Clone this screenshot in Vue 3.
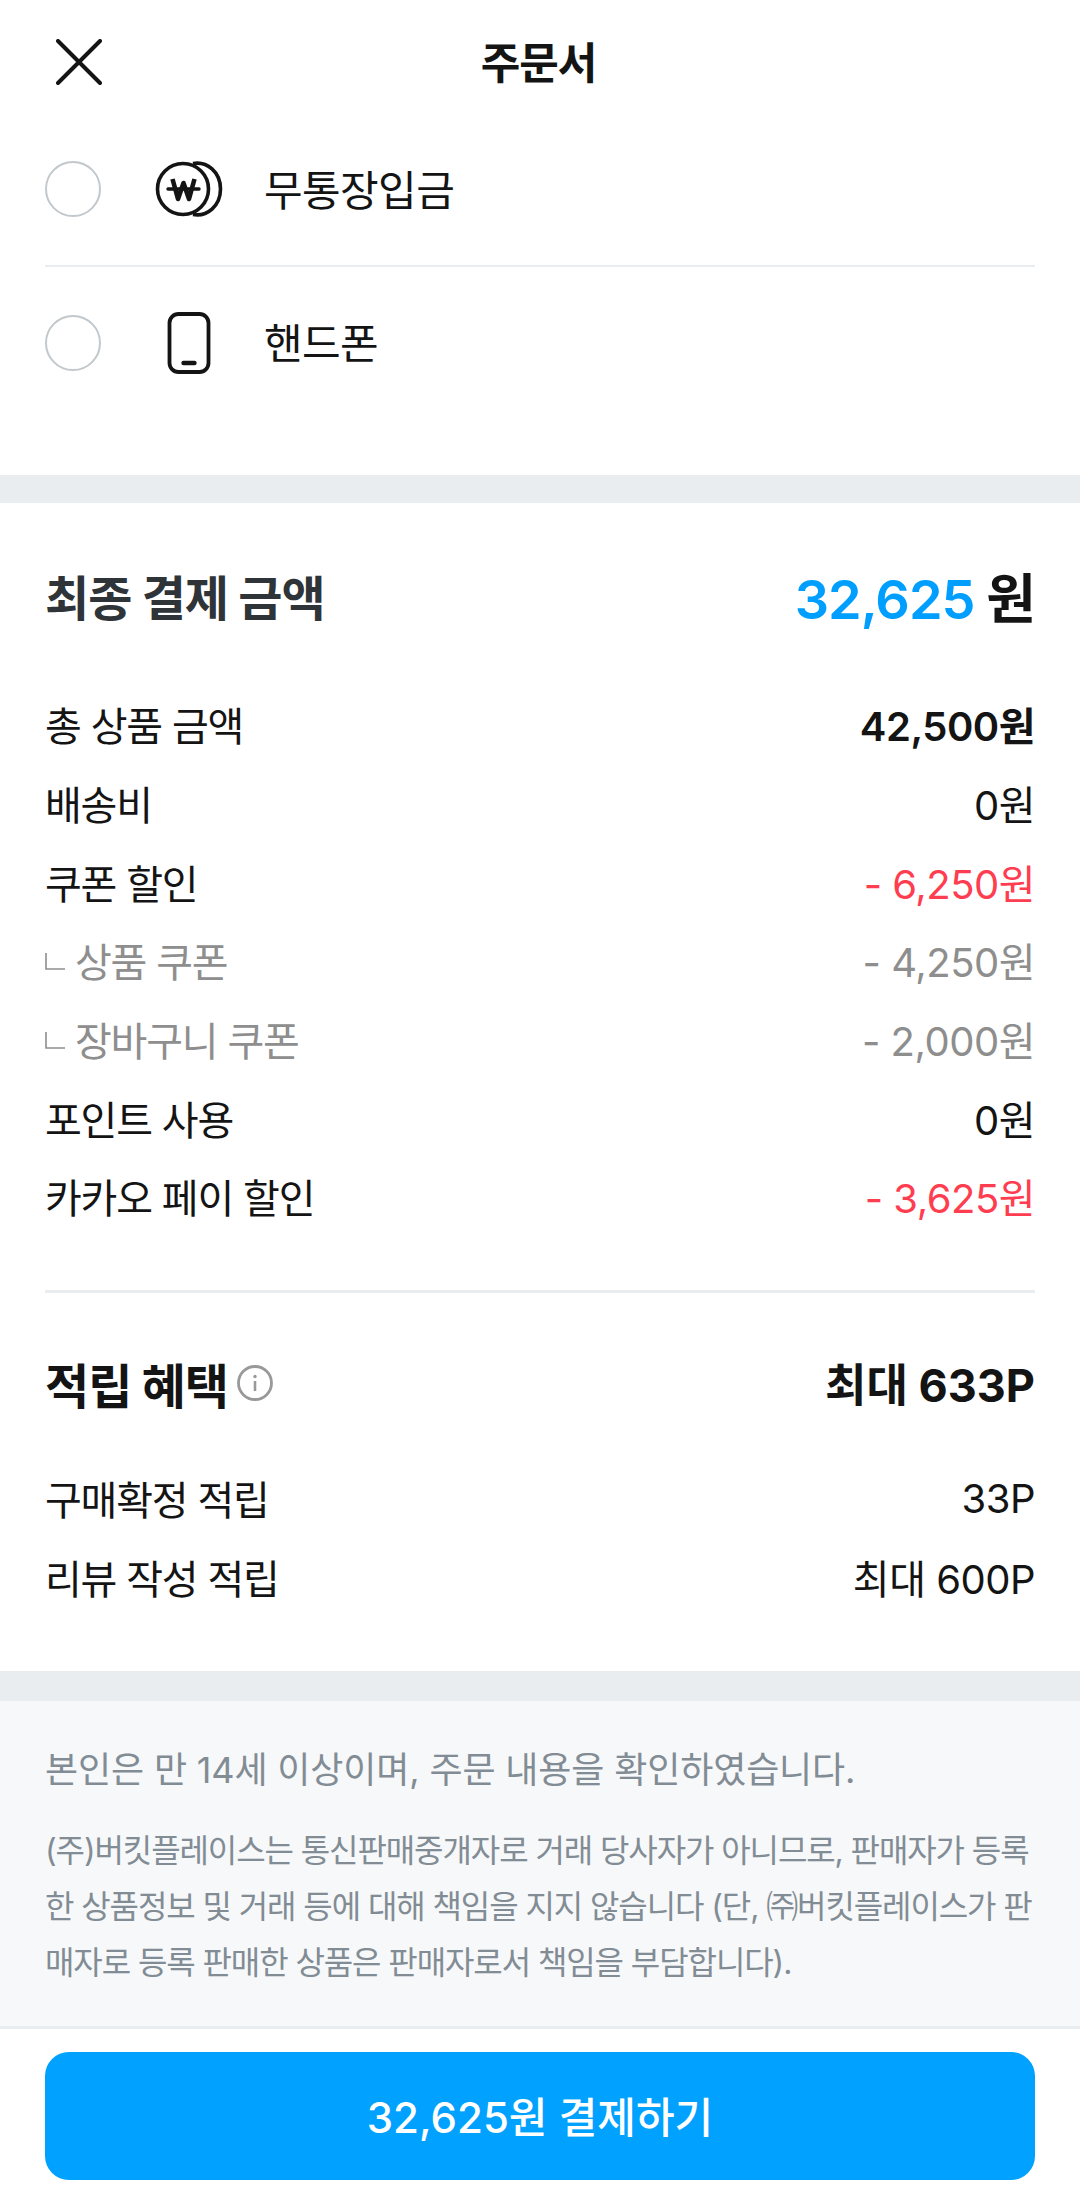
<template>
  <div class="page">
    <header class="top">
      <svg class="close" width="46" height="46" viewBox="0 0 46 46">
        <path d="M2 2 L44 44 M44 2 L2 44" fill="none" stroke="#141414" stroke-width="4" stroke-linecap="round" />
      </svg>
      <h1>주문서</h1>
    </header>

    <section class="methods">
      <div class="method first">
        <span class="radio"></span>
        <span class="method-icon">
          <svg width="68" height="56" viewBox="0 0 68 56">
            <path d="M38 2.5 C52 0 65.5 11 65.5 28 C65.5 45 52 56 38 53.5" fill="none" stroke="#141414" stroke-width="3.6" />
            <circle cx="28" cy="28" r="25.5" fill="#fff" stroke="#141414" stroke-width="3.6" />
            <path d="M17.5 18 L23 38 L28.5 22 L34 38 L39.5 18" fill="none" stroke="#141414" stroke-width="4.6" stroke-linejoin="round" />
            <path d="M13 28 H44" stroke="#141414" stroke-width="3.4" stroke-linecap="round" />
          </svg>
        </span>
        <span class="method-name">무통장입금</span>
      </div>
      <div class="method">
        <span class="radio"></span>
        <span class="method-icon">
          <svg width="44" height="62" viewBox="0 0 44 62">
            <rect x="2.5" y="2" width="39" height="58" rx="9" fill="none" stroke="#141414" stroke-width="3.8" />
            <path d="M16.5 51 H27.5" stroke="#141414" stroke-width="4.4" stroke-linecap="round" />
          </svg>
        </span>
        <span class="method-name">핸드폰</span>
      </div>
    </section>

    <section class="summary">
      <div class="total">
        <h2>최종 결제 금액</h2>
        <p class="total-price"><b>32,625</b> 원</p>
      </div>

      <ul class="rows">
        <li v-for="r in priceRows" :key="r.label" :class="r.type">
          <span class="label">
            <svg v-if="r.type === 'sub'" class="corner" width="20" height="17" viewBox="0 0 20 17">
              <path d="M1 0 V16 H20" fill="none" stroke="#8e8e8e" stroke-width="1.6" />
            </svg>
            {{ r.label }}
          </span>
          <span class="value">{{ r.value }}</span>
        </li>
      </ul>

      <hr class="line" />

      <div class="reward">
        <div class="reward-title">
          <h2>적립 혜택</h2>
          <svg width="36" height="36" viewBox="0 0 36 36">
            <circle cx="18" cy="18" r="16.5" fill="none" stroke="#999" stroke-width="2.8" />
            <circle cx="18" cy="11.5" r="1.7" fill="#999" />
            <path d="M18 16 V26" stroke="#999" stroke-width="2.6" />
          </svg>
        </div>
        <strong>최대 633P</strong>
      </div>

      <ul class="rows reward-rows">
        <li v-for="r in rewardRows" :key="r.label">
          <span class="label">{{ r.label }}</span>
          <span class="value">{{ r.value }}</span>
        </li>
      </ul>
    </section>

    <section class="notice">
      <p class="agree">본인은 만 14세 이상이며, 주문 내용을 확인하였습니다.</p>
      <p class="legal">(주)버킷플레이스는 통신판매중개자로 거래 당사자가 아니므로, 판매자가 등록한 상품정보 및 거래 등에 대해 책임을 지지 않습니다 (단, ㈜버킷플레이스가 판매자로 등록 판매한 상품은 판매자로서 책임을 부담합니다).</p>
    </section>

    <footer class="pay">
      <button>32,625원 결제하기</button>
    </footer>
  </div>
</template>

<script setup>
const priceRows = [
  { label: '총 상품 금액', value: '42,500원', type: 'bold' },
  { label: '배송비', value: '0원', type: '' },
  { label: '쿠폰 할인', value: '- 6,250원', type: 'minus' },
  { label: '상품 쿠폰', value: '- 4,250원', type: 'sub' },
  { label: '장바구니 쿠폰', value: '- 2,000원', type: 'sub' },
  { label: '포인트 사용', value: '0원', type: '' },
  { label: '카카오 페이 할인', value: '- 3,625원', type: 'minus' }
]

const rewardRows = [
  { label: '구매확정 적립', value: '33P' },
  { label: '리뷰 작성 적립', value: '최대 600P' }
]
</script>

<style>
html, body {
  margin: 0;
  background: #fff;
}
</style>

<style scoped>
.page {
  width: 1080px;
  height: 2202px;
  display: flex;
  flex-direction: column;
  overflow: hidden;
  background: #fff;
  color: #141414;
  font-family: Inter, "Noto Sans CJK KR", sans-serif;
}
h1, h2, p, ul {
  margin: 0;
  padding: 0;
}
ul { list-style: none; }

/* 상단 바 */
.top {
  height: 124px;
  box-sizing: border-box;
  padding: 0 3px 4px 0;
  display: flex;
  align-items: center;
  justify-content: center;
  position: relative;
}
.close {
  position: absolute;
  left: 56px;
  top: 39px;
}
.top h1 {
  font-size: 43px;
  font-weight: 700;
  letter-spacing: -1px;
}

/* 결제 수단 */
.methods {
  padding: 0 45px 57px;
  border-bottom: 28px solid #eaedef;
}
.method {
  height: 153px;
  box-sizing: border-box;
  display: flex;
  align-items: center;
  border-top: 2px solid #eaedef;
}
.method.first {
  height: 141px;
  padding-bottom: 11px;
  border-top: 0;
}
.radio {
  width: 56px;
  height: 56px;
  box-sizing: border-box;
  border: 2px solid #c2c8cc;
  border-radius: 50%;
}
.method-icon {
  width: 68px;
  margin-left: 54px;
  display: flex;
  justify-content: center;
}
.method-name {
  margin-left: 41px;
  padding-bottom: 4px;
  font-size: 42px;
  letter-spacing: -0.6px;
}

/* 결제 금액 */
.summary {
  padding: 0 45px;
  border-bottom: 30px solid #eaedef;
  height: 1168px;
}
.total {
  height: 182px;
  box-sizing: border-box;
  padding-top: 2px;
  display: flex;
  justify-content: space-between;
  align-items: center;
}
.total h2, .reward h2 {
  font-size: 48px;
  font-weight: 700;
  letter-spacing: -1px;
}
.total h2 { color: #2f3438; }
.total-price {
  font-size: 54px;
  font-weight: 700;
  letter-spacing: -1px;
}
.total-price b {
  color: #009fff;
  font-weight: 600;
}

.rows li {
  height: 78.7px;
  display: flex;
  justify-content: space-between;
  align-items: center;
  font-size: 40px;
}
.rows li.bold .value { font-weight: 600; }
.rows li.minus .value { color: #ff3d50; }
.rows li.sub { color: #8e8e8e; }
.label {
  display: flex;
  align-items: center;
  letter-spacing: -1.2px;
}
.value { letter-spacing: -0.5px; }
.corner {
  margin-right: 10px;
  margin-top: 2px;
}

.line {
  margin: 54px 0 0;
  border: 0;
  border-top: 3px solid #eaedef;
}
.reward {
  height: 166px;
  box-sizing: border-box;
  padding-top: 14px;
  display: flex;
  justify-content: space-between;
  align-items: center;
}
.reward-title {
  display: flex;
  align-items: center;
  gap: 9px;
}
.reward-title h2 { color: #141414; }
.reward strong {
  font-size: 45px;
  font-weight: 700;
}

/* 안내 문구 */
.notice {
  flex: 1;
  padding: 41px 45px 0;
  background: #f7f8fa;
  color: #828c94;
  border-bottom: 3px solid #eaedef;
}
.agree {
  font-size: 36px;
  letter-spacing: -0.15px;
  line-height: 56px;
}
.legal {
  margin-top: 25px;
  font-size: 32px;
  letter-spacing: -1.1px;
  line-height: 56px;
  word-break: break-all;
}

/* 결제 버튼 */
.pay {
  height: 173px;
  padding: 23px 45px 0;
  box-sizing: border-box;
}
.pay button {
  display: block;
  width: 100%;
  height: 128px;
  padding-bottom: 5px;
  border: 0;
  border-radius: 24px;
  background: #00a1ff;
  color: #fff;
  font-family: inherit;
  font-size: 42px;
  font-weight: 500;
}
</style>
